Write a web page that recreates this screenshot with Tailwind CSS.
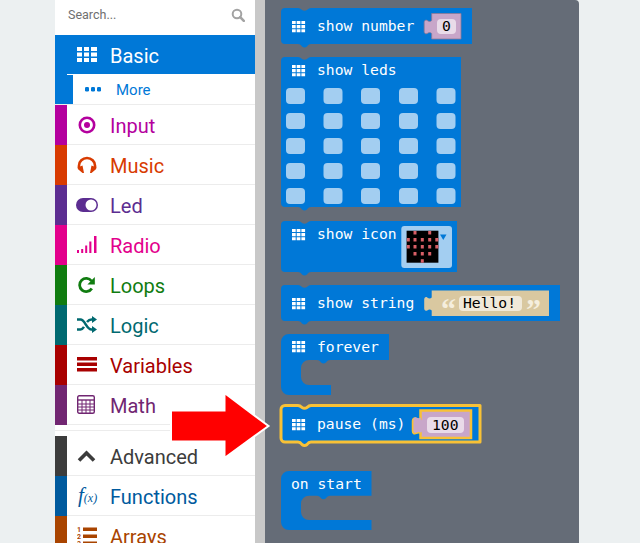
<!DOCTYPE html>
<html><head><meta charset="utf-8"><script src="https://cdn.jsdelivr.net/npm/@tailwindcss/browser@4"></script></head>
<body class="m-0 overflow-hidden">
<div class="relative flex w-[640px] h-[543px] overflow-hidden bg-[#ecf0f1] font-['Roboto',sans-serif]">
  <div class="w-[55px] shrink-0"></div>
  <!-- Sidebar -->
  <div class="w-[200px] shrink-0 h-full bg-white flex flex-col overflow-hidden">
    <div class="h-[35px] shrink-0 flex items-center justify-between pl-[13px] pr-[10px] pb-[5px]">
      <span class="text-[12.500px] text-[#6f6f6f]">Search...</span>
      <svg width="14" height="14" viewBox="0 0 14 14" fill="none" stroke="#a3a3a3" stroke-width="2"><circle cx="6" cy="6" r="4.300"/><path d="M9.200 9.200l3.600 3.600" stroke-width="2.600" stroke-linecap="round"/></svg>
    </div>
    <div class="h-[39px] shrink-0 flex items-center bg-[#0078d7] text-white">
      <div class="w-[55px] shrink-0 flex justify-start pl-[22px]">
        <svg width="20" height="15" viewBox="0 0 20 15" fill="#fff"><path d="M0 0h5v4h-5zM7 0h5v4h-5zM14 0h6v4h-6zM0 5.500h5v4h-5zM7 5.500h5v4h-5zM14 5.500h6v4h-6zM0 11h5v4h-5zM7 11h5v4h-5zM14 11h6v4h-6z"/></svg>
      </div>
      <span class="text-[20px] leading-none mt-[2px]">Basic</span>
    </div>
    <div class="h-[31px] shrink-0 flex border-b border-[#ececec] text-[#0078d7]">
      <div class="w-[12px] shrink-0 bg-[#0078d7]"></div>
      <div class="w-[6px] shrink-0 bg-[#0078d7] border-t border-white"></div>
      <div class="flex-1 flex items-center">
        <div class="w-[43px] shrink-0 pl-[12px] flex">
          <svg width="16" height="5" viewBox="0 0 16 5" fill="#0078d7"><rect x="0" y="0" width="4" height="4.400" rx="1.200"/><rect x="6" y="0" width="4" height="4.400" rx="1.200"/><rect x="12" y="0" width="4" height="4.400" rx="1.200"/></svg>
        </div>
        <span class="text-[15px] leading-none mt-[2px]">More</span>
      </div>
    </div>

    <div class="h-[40px] shrink-0 flex text-[#b4009e]">
      <div class="w-[12px] bg-[#b4009e]"></div>
      <div class="flex-1 flex items-center border-b border-[#ececec]">
        <div class="w-[43px] shrink-0 pl-[10px] flex"><svg width="20" height="20" viewBox="0 0 20 20" fill="none" stroke="#b4009e"><circle cx="10" cy="10" r="7.200" stroke-width="2.600"/><circle cx="10" cy="10" r="3" fill="#b4009e" stroke="none"/></svg></div>
        <span class="text-[20px] leading-none mt-[2px]">Input</span>
      </div>
    </div>
    <div class="h-[40px] shrink-0 flex text-[#d83b01]">
      <div class="w-[12px] bg-[#d83b01]"></div>
      <div class="flex-1 flex items-center border-b border-[#ececec]">
        <div class="w-[43px] shrink-0 pl-[10px] flex"><svg width="20" height="18" viewBox="0 0 20 18" fill="none" stroke="#d83b01"><path d="M2 12V9.500a8 7.500 0 0 1 16 0V12" stroke-width="2.600"/><path d="M.8 10.500h2.200l2.500-1 1.500 7.500h-1.500l-4.700-4zM19.200 10.500h-2.200l-2.500-1-1.500 7.500h1.500l4.700-4z" fill="#d83b01" stroke="none"/></svg></div>
        <span class="text-[20px] leading-none mt-[2px]">Music</span>
      </div>
    </div>
    <div class="h-[40px] shrink-0 flex text-[#5c2d91]">
      <div class="w-[12px] bg-[#5c2d91]"></div>
      <div class="flex-1 flex items-center border-b border-[#ececec]">
        <div class="w-[43px] shrink-0 pl-[9px] flex"><svg width="22" height="14" viewBox="0 0 22 14"><rect x="0" y="0" width="22" height="14" rx="7" fill="#5c2d91"/><circle cx="15" cy="7" r="5.500" fill="#fff"/></svg></div>
        <span class="text-[20px] leading-none mt-[2px]">Led</span>
      </div>
    </div>
    <div class="h-[40px] shrink-0 flex text-[#e3008c]">
      <div class="w-[12px] bg-[#e3008c]"></div>
      <div class="flex-1 flex items-center border-b border-[#ececec]">
        <div class="w-[43px] shrink-0 pl-[10px] flex"><svg width="20" height="18" viewBox="0 0 20 18" fill="#e3008c"><path d="M0 14h2v3h-2zM4.200 13h2v4h-2zM8.200 9.500h2v7.500h-2zM12.300 5.500h2.100v11.500h-2.100zM17 0h2.500v17h-2.500z"/></svg></div>
        <span class="text-[20px] leading-none mt-[2px]">Radio</span>
      </div>
    </div>
    <div class="h-[40px] shrink-0 flex text-[#107c10]">
      <div class="w-[12px] bg-[#107c10]"></div>
      <div class="flex-1 flex items-center border-b border-[#ececec]">
        <div class="w-[43px] shrink-0 pl-[10px] flex"><svg width="19" height="18" viewBox="0 0 19 18" fill="none" stroke="#107c10"><path d="M14.500 5A6.600 6.600 0 1 0 14.800 12.500" stroke-width="2.800"/><path d="M17.800 1v7.600h-7.400z" fill="#107c10" stroke="none"/></svg></div>
        <span class="text-[20px] leading-none mt-[2px]">Loops</span>
      </div>
    </div>
    <div class="h-[40px] shrink-0 flex text-[#006970]">
      <div class="w-[12px] bg-[#006970]"></div>
      <div class="flex-1 flex items-center border-b border-[#ececec]">
        <div class="w-[43px] shrink-0 pl-[10px] flex"><svg width="20" height="17" viewBox="0 0 20 17" fill="none" stroke="#006970" stroke-width="2.500"><path d="M0 3.500h3.500c4.500 0 6 10 11 10h1M0 13.500h3.500c1.500 0 2.600-1.200 3.500-2.600M10 6c1.200-1.500 2.500-2.500 4.500-2.500h1"/><path d="M15 0l5 3.500-5 3.500zM15 10l5 3.500-5 3.500z" fill="#006970" stroke="none"/></svg></div>
        <span class="text-[20px] leading-none mt-[2px]">Logic</span>
      </div>
    </div>
    <div class="h-[40px] shrink-0 flex text-[#a80000]">
      <div class="w-[12px] bg-[#a80000]"></div>
      <div class="flex-1 flex items-center border-b border-[#ececec]">
        <div class="w-[43px] shrink-0 pl-[10px] flex"><svg width="20" height="15" viewBox="0 0 20 15" fill="#a80000"><path d="M0 0h20v3.500h-20zM0 5.500h20v3.500h-20zM0 11h20v3.500h-20z"/></svg></div>
        <span class="text-[20px] leading-none mt-[2px]">Variables</span>
      </div>
    </div>
    <div class="h-[40px] shrink-0 flex text-[#712672]">
      <div class="w-[12px] bg-[#712672]"></div>
      <div class="flex-1 flex items-center border-b border-[#ececec]">
        <div class="w-[43px] shrink-0 pl-[10px] flex"><svg width="18" height="19" viewBox="0 0 18 19" fill="none" stroke="#712672"><rect x=".7" y=".7" width="16.600" height="17.600" rx="1.500" stroke-width="1.400"/><path d="M1 5h16" stroke-width="1.400"/><path d="M1 9h16M1 12h16M1 15h16M5 5v13M9 5v13M13 5v13" stroke-width="1"/></svg></div>
        <span class="text-[20px] leading-none mt-[2px]">Math</span>
      </div>
    </div>
    <div class="h-[11px] shrink-0 flex flex-col justify-center"><div class="h-px bg-[#ececec] mt-[-1px]"></div></div>
    <div class="h-[40px] shrink-0 flex text-[#3c3c3c]">
      <div class="w-[12px] bg-[#3c3c3c]"></div>
      <div class="flex-1 flex items-center border-b border-[#ececec]">
        <div class="w-[43px] shrink-0 pl-[10px] flex"><svg width="19" height="12" viewBox="0 0 19 12" fill="none" stroke="#3c3c3c" stroke-width="3.600"><path d="M2 10.500l7.500-7.500 7.500 7.500"/></svg></div>
        <span class="text-[20px] leading-none mt-[2px]">Advanced</span>
      </div>
    </div>
    <div class="h-[40px] shrink-0 flex text-[#005a9e]">
      <div class="w-[12px] bg-[#005a9e]"></div>
      <div class="flex-1 flex items-center border-b border-[#ececec]">
        <div class="w-[43px] shrink-0 pl-[11px] font-['Liberation_Serif',serif] italic leading-none whitespace-nowrap"><span class="text-[21px]">f</span><span class="text-[12px]">(x)</span></div>
        <span class="text-[20px] leading-none mt-[2px]">Functions</span>
      </div>
    </div>
    <div class="h-[40px] shrink-0 flex text-[#a94400]">
      <div class="w-[12px] bg-[#a94400]"></div>
      <div class="flex-1 flex items-center border-b border-[#ececec]">
        <div class="w-[43px] shrink-0 pl-[10px] flex"><svg width="20" height="22" viewBox="0 0 20 22"><g fill="#a94400" font-family="Roboto" font-size="7" font-weight="700"><text x="0" y="7">1</text><text x="0" y="14">2</text><text x="0" y="21">3</text><path d="M6 2.500h14v3.400h-14zM6 9.500h14v3.400h-14zM6 16.500h14v3.400h-14z"/></g></svg></div>
        <span class="text-[20px] leading-none mt-[2px]">Arrays</span>
      </div>
    </div>
  </div>
  <div class="w-[10px] shrink-0 bg-[#c8c8c8]"></div>
  <!-- Flyout -->
  <div class="w-[314px] shrink-0 h-full bg-[#656c77] rounded-tr-[4px]">
    <svg width="314" height="543" viewBox="265 0 314 543" class="block" font-family="'DejaVu Sans Mono',monospace" font-size="14.700">
      <defs>
        <g id="g"><path fill="#fff" d="M0 0h3.700v3h-3.700zM4.700 0h3.700v3h-3.700zM9.400 0h3.700v3h-3.700zM0 4h3.700v3.200h-3.700zM4.700 4h3.700v3.200h-3.700zM9.400 4h3.700v3.200h-3.700zM0 8.200h3.700v3h-3.700zM4.700 8.200h3.700v3h-3.700zM9.400 8.200h3.700v3h-3.700z"/></g>
      </defs>
      <!-- show number -->
      <path fill="#0078d7" d="M285 8H298c2 0 3 1 4 2q2.500 1.500 5 0c1-1 2-2 4-2H472V44H311c-2 0-3 1-4 2.500q-2.500 2-5 0c-1-1.500-2-2.500-4-2.500H285a4 4 0 0 1-4-4V12a4 4 0 0 1 4-4z"/>
      <use href="#g" x="292" y="21"/>
      <text x="317" y="31" fill="#fff">show number</text>
      <path fill="#c8a6c9" stroke="#8f7a95" stroke-width=".8" d="M431.700 13.500H461V39H431.700V33.500c-1.500-1.500-3-1-4.500 0-2 1-3-.5-3-2V22.500c0-2 1.500-3 3-2 1.500 1 3 1.500 4.500 0z"/>
      <rect x="437" y="19" width="19" height="15" rx="4" fill="#fff" fill-opacity=".6"/>
      <text x="442" y="31" fill="#000">0</text>

      <!-- show leds -->
      <path fill="#0078d7" d="M285 57H298c2 0 3 1 4 2q2.500 1.500 5 0c1-1 2-2 4-2H461V207H311c-2 0-3 1-4 2.500q-2.500 2-5 0c-1-1.500-2-2.500-4-2.500H285a4 4 0 0 1-4-4V61a4 4 0 0 1 4-4z"/>
      <use href="#g" x="292" y="65"/>
      <text x="317" y="75" fill="#fff">show leds</text>
      <g fill="#a3cef1">
        <rect x="286" y="88" width="19" height="16" rx="4"/><rect x="323.500" y="88" width="19" height="16" rx="4"/><rect x="361" y="88" width="19" height="16" rx="4"/><rect x="399" y="88" width="19" height="16" rx="4"/><rect x="436.500" y="88" width="19" height="16" rx="4"/>
        <rect x="286" y="113" width="19" height="16" rx="4"/><rect x="323.500" y="113" width="19" height="16" rx="4"/><rect x="361" y="113" width="19" height="16" rx="4"/><rect x="399" y="113" width="19" height="16" rx="4"/><rect x="436.500" y="113" width="19" height="16" rx="4"/>
        <rect x="286" y="138" width="19" height="16" rx="4"/><rect x="323.500" y="138" width="19" height="16" rx="4"/><rect x="361" y="138" width="19" height="16" rx="4"/><rect x="399" y="138" width="19" height="16" rx="4"/><rect x="436.500" y="138" width="19" height="16" rx="4"/>
        <rect x="286" y="163" width="19" height="16" rx="4"/><rect x="323.500" y="163" width="19" height="16" rx="4"/><rect x="361" y="163" width="19" height="16" rx="4"/><rect x="399" y="163" width="19" height="16" rx="4"/><rect x="436.500" y="163" width="19" height="16" rx="4"/>
        <rect x="286" y="188" width="19" height="16" rx="4"/><rect x="323.500" y="188" width="19" height="16" rx="4"/><rect x="361" y="188" width="19" height="16" rx="4"/><rect x="399" y="188" width="19" height="16" rx="4"/><rect x="436.500" y="188" width="19" height="16" rx="4"/>
      </g>

      <!-- show icon -->
      <path fill="#0078d7" d="M285 221H298c2 0 3 1 4 2q2.500 1.500 5 0c1-1 2-2 4-2H457V272H311c-2 0-3 1-4 2.500q-2.500 2-5 0c-1-1.500-2-2.500-4-2.500H285a4 4 0 0 1-4-4V225a4 4 0 0 1 4-4z"/>
      <use href="#g" x="292" y="229"/>
      <text x="317" y="239" fill="#fff">show icon</text>
      <rect x="401.300" y="226" width="50.700" height="42" rx="3" fill="#a3cef1"/>
      <rect x="406.600" y="230.700" width="31.800" height="32" fill="#000"/>
      <path fill="#0078d7" d="M440 234.500h6.500l-3.250 5.500z"/>
      <g fill="#d85f66">
        <rect x="413.500" y="231" width="3" height="3.500"/><rect x="428.200" y="231" width="3" height="3.500"/>
        <rect x="406.800" y="238" width="3" height="3.500"/><rect x="413.500" y="238" width="3" height="3.500"/><rect x="420.800" y="238" width="3" height="3.500"/><rect x="428.200" y="238" width="3" height="3.500"/><rect x="435.300" y="238" width="3" height="3.500"/>
        <rect x="406.800" y="245" width="3" height="3.500"/><rect x="413.500" y="245" width="3" height="3.500"/><rect x="420.800" y="245" width="3" height="3.500"/><rect x="428.200" y="245" width="3" height="3.500"/><rect x="435.300" y="245" width="3" height="3.500"/>
        <rect x="413.500" y="252" width="3" height="3.500"/><rect x="420.800" y="252" width="3" height="3.500"/><rect x="428.200" y="252" width="3" height="3.500"/>
        <rect x="420.800" y="259.200" width="3" height="3.500"/>
      </g>

      <!-- show string -->
      <path fill="#0078d7" d="M285 285H298c2 0 3 1 4 2q2.500 1.500 5 0c1-1 2-2 4-2H560V321H311c-2 0-3 1-4 2.500q-2.500 2-5 0c-1-1.500-2-2.500-4-2.500H285a4 4 0 0 1-4-4V289a4 4 0 0 1 4-4z"/>
      <use href="#g" x="292" y="298"/>
      <text x="317" y="308" fill="#fff">show string</text>
      <path fill="#d9c8a0" d="M431.700 290.500H549V316H431.700V310.500c-1.500-1.500-3-1-4.500 0-2 1-3-.5-3-2V299.500c0-2 1.500-3 3-2 1.500 1 3 1.500 4.500 0z"/>
      <rect x="459" y="296" width="63" height="15" rx="4" fill="#fff" fill-opacity=".6"/>
      <text x="463" y="308" fill="#000">Hello!</text>
      <text x="441" y="319" fill="#f5eedd" font-family="'Liberation Serif',serif" font-size="30" font-weight="700">“</text>
      <text x="526" y="319" fill="#f5eedd" font-family="'Liberation Serif',serif" font-size="30" font-weight="700">”</text>

      <!-- forever -->
      <path fill="#0078d7" d="M289 334H389V360H330c-2 0-3 1-4 2.500q-2.500 2-5 0c-1-1.500-2-2.500-4-2.500H309a8 8 0 0 0-8 8V377a8 8 0 0 0 8 8H331V395H289a8 8 0 0 1-8-8V342a8 8 0 0 1 8-8z"/>
      <use href="#g" x="292" y="341"/>
      <text x="317" y="352" fill="#fff">forever</text>

      <!-- pause -->
      <path fill="#0078d7" stroke="#f8c136" stroke-width="3" stroke-linejoin="round" d="M285 405.500H298c2 0 3 1 4 2q2.500 1.500 5 0c1-1 2-2 4-2H480V442H311c-2 0-3 1-4 2.500q-2.500 2-5 0c-1-1.500-2-2.500-4-2.500H285a4 4 0 0 1-4-4V409.500a4 4 0 0 1 4-4z"/>
      <use href="#g" x="292" y="419"/>
      <text x="317" y="429" fill="#fff">pause (ms)</text>
      <path fill="#c8a6c9" stroke="#f8c136" stroke-width="2.500" d="M420.500 410.500H471V438H420.500V433c-1.500-1.500-3-1-4.500 0-2 1-3-.5-3-2V421c0-2 1.500-3 3-2 1.500 1 3 1.500 4.500 0z"/>
      <path fill="#c8a6c9" d="M421 417.500c-1.500 1-3 1-4.500 0-1.500-.8-3 .5-3 2V431c0 1.500 1.500 2.500 3 1.500 1.500-.8 3-.8 4.500 0z"/>
      <rect x="427" y="417" width="37" height="16" rx="4" fill="#fff" fill-opacity=".6"/>
      <text x="432" y="430" fill="#000">100</text>

      <!-- on start -->
      <path fill="#0078d7" d="M289 471H371.500V495.700H330c-2 0-3 1-4 2.500q-2.500 2-5 0c-1-1.500-2-2.500-4-2.500H309a8 8 0 0 0-8 8V512a8 8 0 0 0 8 8H371.500V530H289a8 8 0 0 1-8-8V479a8 8 0 0 1 8-8z"/>
      <text x="291" y="489" fill="#fff">on start</text>
    </svg>
  </div>
  <!-- Red arrow overlay -->
  <svg class="absolute left-[165px] top-[390px]" width="110" height="72" viewBox="165 390 110 72">
    <path fill="#f00" stroke="#fff" stroke-width="2" d="M171 410.500H224.500V393L268.500 426L224.500 458V441.500H171z"/>
  </svg>
</div>
</body></html>
